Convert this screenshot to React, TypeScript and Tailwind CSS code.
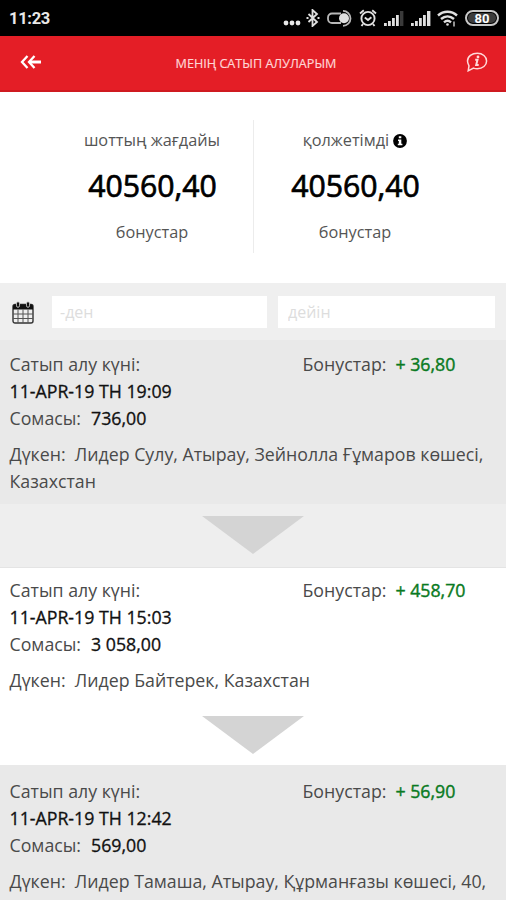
import React, { useState } from 'react'

type Purchase = {
  date: string
  total: string
  bonus: string
  shop: string
  rowClass: string
  arrowClass: string
}

const purchases: Purchase[] = [
  {
    date: '11-APR-19 TH 19:09',
    total: '736,00',
    bonus: '+ 36,80',
    shop: 'Лидер Сулу, Атырау, Зейнолла Ғұмаров көшесі, Казахстан',
    rowClass: 'bg-[#e9e9e9] pt-[11px] h-[164px]',
    arrowClass: 'bg-[#eeeeee] h-[64px] border-b border-[#e4e4e4]'
  },
  {
    date: '11-APR-19 TH 15:03',
    total: '3 058,00',
    bonus: '+ 458,70',
    shop: 'Лидер Байтерек, Казахстан',
    rowClass: 'bg-white pt-[9px] h-[136px]',
    arrowClass: 'bg-white h-[61px]'
  },
  {
    date: '11-APR-19 TH 12:42',
    total: '569,00',
    bonus: '+ 56,90',
    shop: 'Лидер Тамаша, Атырау, Құрманғазы көшесі, 40,',
    rowClass: 'bg-[#e9e9e9] pt-[13px] h-[166px]',
    arrowClass: 'bg-[#eeeeee] h-[64px]'
  }
]

const SignalIcon: React.FC<{ weak?: boolean }> = ({ weak }) => (
  <svg width="20" height="15" viewBox="0 0 20 15" fill="#e0e0e0">
    <rect x="0" y="12" width="2.8" height="3" />
    <rect x="4" y="10" width="2.8" height="5" />
    <rect x="8" y="7" width="2.8" height="8" />
    <rect x="12" y="4" width="2.8" height="11" />
    <rect x="16" y="0" width="3.4" height="15" fill={weak ? '#3a3a3a' : '#e0e0e0'} />
  </svg>
)

const StatusBar: React.FC = () => (
  <div className="h-9 bg-black flex items-center justify-between pl-[9px] pr-[7px]">
    <span className="mt-[3px] font-[Roboto,sans-serif] text-[16.500px] font-bold tracking-[-0.3px] text-[#e8e8e8]">11:23</span>
    <div className="flex items-center">
      <svg width="18" height="6" viewBox="0 0 18 6" fill="#e8e8e8" className="mt-2.5 mr-[5px]">
        <circle cx="3" cy="3" r="2.4" />
        <circle cx="9" cy="3" r="2.4" />
        <circle cx="15" cy="3" r="2.4" />
      </svg>
      <svg width="14" height="18" viewBox="0 0 14 18" fill="none" stroke="#e0e0e0" strokeWidth="1.8" className="mr-[7px]">
        <path d="M2.5 5l8.5 8-4.5 4V1L11 5l-8.500 8" />
        <path d="M.5 9h2M11.500 9h2" strokeWidth="2" />
      </svg>
      <svg width="25" height="17" viewBox="0 0 25 17" fill="none" stroke="#b8b8b8" strokeWidth="1.800" className="mr-[7px]">
        <path d="M14 3.500H5a4 4 0 0 0-4 4v1.500a4 4 0 0 0 4 4h9" />
        <circle cx="17" cy="8.300" r="5" fill="#e0e0e0" stroke="none" />
        <path d="M16 .9a7.500 7.500 0 0 1 0 15" />
      </svg>
      <svg width="18" height="18" viewBox="0 0 18 18" fill="none" stroke="#e0e0e0" strokeWidth="1.900" className="mr-[7px]">
        <circle cx="9" cy="9.500" r="6.600" />
        <path d="M1 4.500L4.800 1.300M17 4.500l-3.800-3.200M5.800 8.500l3.200 2.500 3.400-2.800M4 15l-1.500 2M14 15l1.500 2" />
      </svg>
      <div className="flex gap-[7px] mr-[6px]">
        <SignalIcon weak />
        <SignalIcon />
      </div>
      <svg width="21" height="17" viewBox="0 0 21 17" fill="none" stroke="#e0e0e0" strokeWidth="2.400" className="mr-[7px]">
        <path d="M1 5.500c5.500-5 13.500-5 19 0M4 9c4-3.500 9-3.500 13 0M7 12.300c2.300-2 4.700-2 7 0" />
        <circle cx="10.500" cy="14.500" r="1.300" fill="#e0e0e0" stroke="none" />
        <path d="M17 11.500v5" strokeWidth="1.300" />
      </svg>
      <div className="w-[34px] h-4 rounded-full border-2 border-[#c8c8c8] p-px">
        <div className="flex h-full items-center justify-center rounded-full bg-[#3c3c3c] font-[Roboto,sans-serif] text-[13px] leading-none font-bold text-white">
          80
        </div>
      </div>
    </div>
  </div>
)

const Header: React.FC = () => (
  <header className="h-14 bg-[#e41e26] border-b-2 border-[#cf1a20] flex items-center justify-between pl-5 pr-[18px]">
    <button type="button" aria-label="Артқа">
      <svg width="22" height="14" viewBox="0 0 22 14" fill="none" stroke="#fff" strokeWidth="2.300" className="-mt-0.5">
        <path d="M7.500 1L2 7l5.500 6M14.500 1L9 7l5.500 6" />
        <path d="M9 7h12" strokeWidth="3" />
      </svg>
    </button>
    <h1 className="text-[12.600px] text-[#ffd5d5] whitespace-nowrap ml-1 mt-0.5 [-webkit-text-stroke:0.2px]">
      МЕНІҢ САТЫП АЛУЛАРЫМ
    </h1>
    <button type="button" aria-label="Ақпарат">
      <svg width="22" height="20" viewBox="0 0 22 20" fill="none" stroke="#ffdada" strokeWidth="1.500" className="-mt-0.5">
        <path d="M11.300 1.200c5.300 0 9.300 3.400 9.300 7.800s-4 7.800-9.300 7.800c-1.500 0-2.600-.2-3.800-.7L2.200 18.800l.8-5C2.200 12.400 1.500 10.700 1.500 9c0-4.400 4.500-7.800 9.800-7.800z" />
        <path d="M9.200 7.700h2.300l-1.300 5.300h2.500" strokeWidth="2" />
        <circle cx="12" cy="4.900" r="1.400" fill="#ffdada" stroke="none" />
      </svg>
    </button>
  </header>
)

const InfoIcon: React.FC = () => (
  <svg width="14" height="14" viewBox="0 0 14 14">
    <circle cx="7" cy="7" r="6.900" fill="#000" />
    <path d="M5.800 2.300h2.500v2H5.800zM5 5.500h3.300v4.200h1.100v1.600H4.800V9.700h1V7.100H5z" fill="#fff" />
  </svg>
)

const Balance: React.FC<{ label: string; info?: boolean }> = ({ label, info }) => (
  <div className="flex flex-col items-center">
    <span className="flex items-center gap-1 h-[27px] mt-[7px] text-[16.300px] text-[#555]">
      {label}
      {info && <InfoIcon />}
    </span>
    <span className="h-10 leading-10 mt-[12px] pl-px text-[30.200px] text-black [-webkit-text-stroke:0.7px]">40560,40</span>
    <span className="h-[27px] mt-[14px] text-[16.300px] text-[#555]">бонустар</span>
  </div>
)

const CalendarIcon: React.FC = () => (
  <svg width="22" height="23" viewBox="0 0 22 23" fill="none" className="mt-0.5">
    <path d="M1 5.500a2 2 0 0 1 2-2h16a2 2 0 0 1 2 2V20a2 2 0 0 1-2 2H3a2 2 0 0 1-2-2z" stroke="#333" strokeWidth="1.400" />
    <path d="M1 8.500v-3a2 2 0 0 1 2-2h16a2 2 0 0 1 2 2v3z" fill="#111" />
    <path d="M1 13h20M1 17.500h20M6 8.500V22M11 8.500V22M16 8.500V22" stroke="#555" strokeWidth="1" />
    <rect x="4.500" y=".7" width="3" height="5.600" rx="1.500" fill="#111" stroke="#ddd" strokeWidth=".8" />
    <rect x="14.500" y=".7" width="3" height="5.600" rx="1.500" fill="#111" stroke="#ddd" strokeWidth=".8" />
  </svg>
)

const PurchaseRow: React.FC<{ item: Purchase }> = ({ item }) => (
  <div>
    <div className={`pl-[9.500px] pr-2 text-[17.750px] leading-[26.800px] text-[#4a4a4a] ${item.rowClass}`}>
      <div className="flex">
        <span className="w-[293px]">Сатып алу күні:</span>
        <span>Бонустар:</span>
        <span className="ml-[9px] text-[#0a7a22] [-webkit-text-stroke:0.4px]">{item.bonus}</span>
      </div>
      <p className="text-[#111] [-webkit-text-stroke:0.3px]">{item.date}</p>
      <div className="flex">
        <span>Сомасы:</span>
        <span className="ml-[10px] text-[#111] [-webkit-text-stroke:0.3px]">{item.total}</span>
      </div>
      <p className="mt-[10px]">{`Дүкен:\u00a0 ${item.shop}`}</p>
    </div>
    <div className={`flex justify-center pt-3 ${item.arrowClass}`}>
      <svg width="102" height="38" viewBox="0 0 102 38">
        <path d="M0 0h102L51 38z" fill="#d4d4d4" />
      </svg>
    </div>
  </div>
)

const App: React.FC = () => {
  const [from, setFrom] = useState('')
  const [to, setTo] = useState('')

  return (
    <div className="w-full h-[900px] overflow-hidden bg-white font-['Open_Sans','Noto_Sans',sans-serif]">
      <StatusBar />
      <Header />

      <section className="h-[191px] flex pl-[51px] pr-[50px] pt-7">
        <div className="w-[203px] h-[133px] border-r border-[#ececec]">
          <Balance label="шоттың жағдайы" />
        </div>
        <div className="w-[202px]">
          <Balance label="қолжетімді" info />
        </div>
      </section>

      <section className="h-[57px] bg-[#efefef] flex items-center pl-3 pr-[11px]">
        <CalendarIcon />
        <input
          value={from}
          onChange={e => setFrom(e.target.value)}
          placeholder="-ден"
          className="w-[215px] h-8 ml-[18px] px-2 bg-white text-[16px] outline-none placeholder:text-[#ddd]"
        />
        <input
          value={to}
          onChange={e => setTo(e.target.value)}
          placeholder="дейін"
          className="w-[217px] h-8 ml-[11px] px-[10px] bg-white text-[16px] outline-none placeholder:text-[#ddd]"
        />
      </section>

      {purchases.map(item => (
        <PurchaseRow key={item.date} item={item} />
      ))}
    </div>
  )
}

export default App
